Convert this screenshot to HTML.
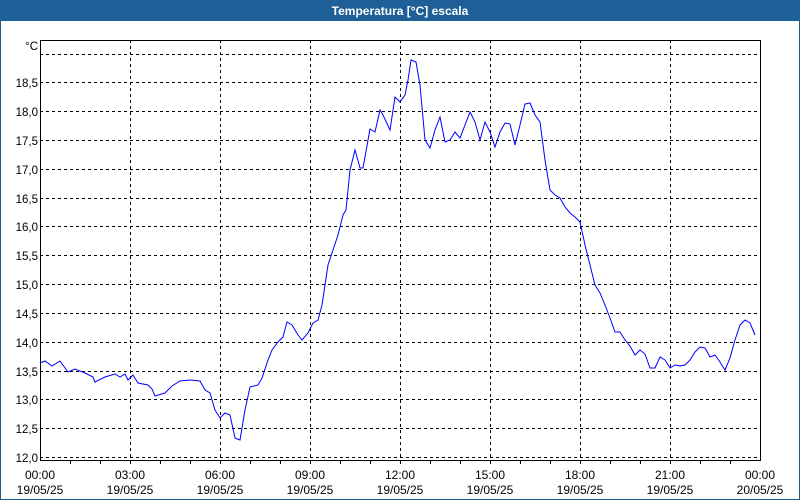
<!DOCTYPE html>
<html><head><style>
body{margin:0;width:800px;height:500px;overflow:hidden;background:#fff;font-family:"Liberation Sans",sans-serif;}
</style></head><body>
<svg width="800" height="500" xmlns="http://www.w3.org/2000/svg" style="display:block">
<rect x="0" y="0" width="800" height="500" fill="#fff"/>
<rect x="0" y="0" width="800" height="21" fill="#1d5f96"/>
<rect x="0" y="0" width="1" height="500" fill="#1d5f96"/>
<rect x="799" y="0" width="1" height="500" fill="#1d5f96"/>
<rect x="0" y="499" width="800" height="1" fill="#1d5f96"/>
<text x="400" y="15" fill="#fff" font-size="12" font-weight="bold" text-anchor="middle">Temperatura [°C] escala</text>
<g stroke="#000" stroke-width="1" stroke-dasharray="3,3" fill="none">
<path d="M40 54.5H760M40 82.5H760M40 111.5H760M40 140.5H760M40 169.5H760M40 198.5H760M40 226.5H760M40 255.5H760M40 284.5H760M40 313.5H760M40 342.5H760M40 371.5H760M40 399.5H760M40 428.5H760M40 457.5H760"/>
<path d="M130.5 40V460M220.5 40V460M310.5 40V460M400.5 40V460M490.5 40V460M580.5 40V460M670.5 40V460"/>
</g>
<rect x="40.5" y="40.5" width="720" height="420" fill="none" stroke="#000"/>
<g stroke="#000"><path d="M70.5 461v3M100.5 461v3M130.5 461v3M160.5 461v3M190.5 461v3M220.5 461v3M250.5 461v3M280.5 461v3M310.5 461v3M340.5 461v3M370.5 461v3M400.5 461v3M430.5 461v3M460.5 461v3M490.5 461v3M520.5 461v3M550.5 461v3M580.5 461v3M610.5 461v3M640.5 461v3M670.5 461v3M700.5 461v3M730.5 461v3"/></g>
<g font-size="11.5" fill="#000" text-anchor="end">
<text x="38" y="50">°C</text>
<text x="38" y="87">18,5</text><text x="38" y="116">18,0</text><text x="38" y="145">17,5</text><text x="38" y="174">17,0</text><text x="38" y="203">16,5</text><text x="38" y="231">16,0</text><text x="38" y="260">15,5</text><text x="38" y="289">15,0</text><text x="38" y="318">14,5</text><text x="38" y="347">14,0</text><text x="38" y="376">13,5</text><text x="38" y="404">13,0</text><text x="38" y="433">12,5</text><text x="38" y="462">12,0</text>
</g>
<g font-size="12" fill="#000" text-anchor="middle">
<text x="40" y="479">00:00</text><text x="40" y="494">19/05/25</text>
<text x="130" y="479">03:00</text><text x="130" y="494">19/05/25</text>
<text x="220" y="479">06:00</text><text x="220" y="494">19/05/25</text>
<text x="310" y="479">09:00</text><text x="310" y="494">19/05/25</text>
<text x="400" y="479">12:00</text><text x="400" y="494">19/05/25</text>
<text x="490" y="479">15:00</text><text x="490" y="494">19/05/25</text>
<text x="580" y="479">18:00</text><text x="580" y="494">19/05/25</text>
<text x="670" y="479">21:00</text><text x="670" y="494">19/05/25</text>
<text x="760" y="479">00:00</text><text x="760" y="494">20/05/25</text>
</g>
<polyline fill="none" stroke="#0000ff" stroke-width="1" points="40,363 45,361 52,366 60,361 68,372 75,369 85,373 93,377 95,382 105,377 115,374 120,377 125,374 128,380 133,375 138,383 148,385 152,389 155,396 165,393 172,386 180,381 190,380 200,381 205,390 210,393 215,410 220,418 225,413 230,415 235,438 240,440 245,410 250,387 258,385 262,378 268,360 272,350 278,342 283,337 287,322 292,325 298,335 302,340 308,333 313,323 318,320 322,305 328,265 333,250 338,235 343,215 346,210 350,170 355,150 360,168 363,168 370,129 375,132 380,110 383,115 390,130 395,97 400,102 405,95 408,80 411,60 416,62 420,85 425,140 430,148 435,130 440,117 445,142 450,140 455,132 460,138 465,125 470,112 475,122 480,140 485,122 490,132 495,147 500,132 505,123 510,124 515,145 520,125 525,104 530,103 535,115 540,122 545,160 550,190 555,195 560,198 565,207 570,213 575,217 580,222 585,245 590,265 595,285 600,293 605,305 610,318 615,332 620,332 625,340 630,346 635,355 640,350 645,354 650,368 655,368 660,357 665,360 670,368 675,365 680,366 685,365 690,360 695,352 700,347 705,348 710,357 715,355 720,362 725,370 730,358 735,340 740,325 745,320 750,323 755,335"/>
</svg>
</body></html>
